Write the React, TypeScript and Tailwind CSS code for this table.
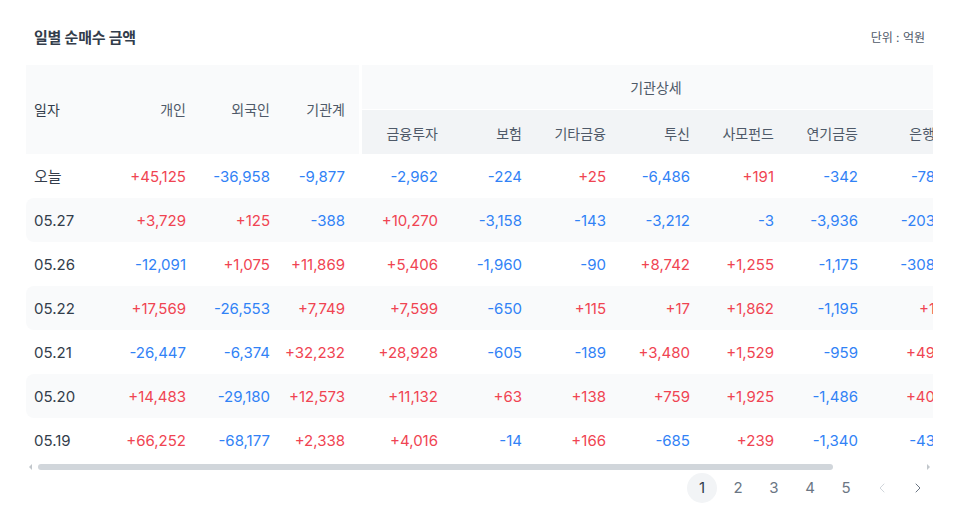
import { ChevronLeft, ChevronRight } from "lucide-react"

const detailCols = ["금융투자", "보험", "기타금융", "투신", "사모펀드", "연기금등", "은행"]

const rows: { date: string; values: string[] }[] = [
  { date: "오늘", values: ["+45,125", "-36,958", "-9,877", "-2,962", "-224", "+25", "-6,486", "+191", "-342", "-78", "+1,204"] },
  { date: "05.27", values: ["+3,729", "+125", "-388", "+10,270", "-3,158", "-143", "-3,212", "-3", "-3,936", "-203", "-3,466"] },
  { date: "05.26", values: ["-12,091", "+1,075", "+11,869", "+5,406", "-1,960", "-90", "+8,742", "+1,255", "-1,175", "-308", "-853"] },
  { date: "05.22", values: ["+17,569", "-26,553", "+7,749", "+7,599", "-650", "+115", "+17", "+1,862", "-1,195", "+1", "+1,235"] },
  { date: "05.21", values: ["-26,447", "-6,374", "+32,232", "+28,928", "-605", "-189", "+3,480", "+1,529", "-959", "+49", "+589"] },
  { date: "05.20", values: ["+14,483", "-29,180", "+12,573", "+11,132", "+63", "+138", "+759", "+1,925", "-1,486", "+40", "+2,124"] },
  { date: "05.19", values: ["+66,252", "-68,177", "+2,338", "+4,016", "-14", "+166", "-685", "+239", "-1,340", "-43", "-413"] },
]

const tone = (v: string) => (v.startsWith("+") ? "text-[#f04452]" : "text-[#3182f6]")

export default function App() {
  return (
    <div className="w-[980px] h-[506px] bg-white pl-[26px] pr-[47px] pt-[27px] font-['Inter','Noto_Sans_CJK_KR',sans-serif] text-[#333d4b]">
      <div className="flex items-center justify-between px-2 h-[22px] mb-[16px]">
        <h2 className="text-[15px] font-bold text-[#333d4b] tracking-[-0.2px]">일별 순매수 금액</h2>
        <span className="text-[12px] text-[#4e5968]">단위 : 억원</span>
      </div>

      <div className="w-full overflow-hidden">
        <table className="table-fixed w-[1008px] border-separate border-spacing-0 text-[15px]">
          <colgroup>
            {Array.from({ length: 12 }).map((_, i) => (
              <col key={i} className="w-[84px]" />
            ))}
          </colgroup>
          <thead className="text-[14px] font-normal text-[#4e5968]">
            <tr>
              <th rowSpan={2} className="bg-[#f9fafb] h-[44px] pl-2 text-left font-normal text-[#333d4b]">일자</th>
              <th rowSpan={2} className="bg-[#f9fafb] pr-2 text-right font-normal">개인</th>
              <th rowSpan={2} className="bg-[#f9fafb] pr-2 text-right font-normal">외국인</th>
              <th rowSpan={2} className="bg-[#f9fafb] pr-[14px] text-right font-normal border-r-[3px] border-white">기관계</th>
              <th colSpan={7} className="bg-[#f9fafb] h-[44px] text-center font-normal">기관상세</th>
              <th rowSpan={2} className="bg-[#f9fafb] pr-2 text-right font-normal border-l-[3px] border-white">기타법인</th>
            </tr>
            <tr>
              {detailCols.map((c, i) => (
                <th
                  key={c}
                  className={`bg-[#f2f4f6] h-[45px] pt-[2px] border-t border-white text-right font-normal ${i === 6 ? "pr-[15px]" : "pr-2"}`}
                >
                  {c}
                </th>
              ))}
            </tr>
          </thead>
          <tbody>
            {rows.map((r, ri) => {
              const striped = ri % 2 === 1
              const bg = striped ? "bg-[#f9fafb]" : ""
              return (
                <tr key={r.date} className="h-[44px]">
                  <td className={`pt-[3px] pl-2 text-left text-[#333d4b] ${bg} ${striped ? "rounded-l-lg" : ""}`}>{r.date}</td>
                  {r.values.map((v, i) => (
                    <td
                      key={i}
                      className={`pt-[3px] text-right ${tone(v)} ${bg} ${i === 2 ? "pr-[17px]" : i === 9 ? "pr-[15px]" : "pr-2"} ${
                        striped && i === 10 ? "rounded-r-lg" : ""
                      }`}
                    >
                      {v}
                    </td>
                  ))}
                </tr>
              )
            })}
          </tbody>
        </table>
      </div>

      {/* horizontal scrollbar */}
      <div className="flex items-center h-[10px]">
        <div className="w-[12px] flex justify-start pl-[3px]">
          <span className="w-0 h-0 border-y-[3px] border-y-transparent border-r-[3px] border-r-[#c2c7cc]" />
        </div>
        <div className="w-[795px] h-[6px] rounded-full bg-[#d1d6db]" />
        <div className="flex-1" />
        <div className="w-[12px] flex justify-end pr-[3px]">
          <span className="w-0 h-0 border-y-[3px] border-y-transparent border-l-[3px] border-l-[#c2c7cc]" />
        </div>
      </div>

      <div className="flex justify-end gap-[6px] mt-[1px]">
        {[1, 2, 3, 4, 5].map((n) => (
          <button
            key={n}
            className={`w-[30px] h-[30px] rounded-full flex items-center justify-center text-[15px] ${
              n === 1 ? "bg-[#f2f4f6] text-[#333d4b]" : "text-[#6b7684]"
            }`}
          >
            {n}
          </button>
        ))}
        <button className="w-[30px] h-[30px] flex items-center justify-center text-[#d1d6db]">
          <ChevronLeft size={16} strokeWidth={1.5} />
        </button>
        <button className="w-[30px] h-[30px] flex items-center justify-center text-[#6b7684]">
          <ChevronRight size={16} strokeWidth={1.5} />
        </button>
      </div>
    </div>
  )
}
